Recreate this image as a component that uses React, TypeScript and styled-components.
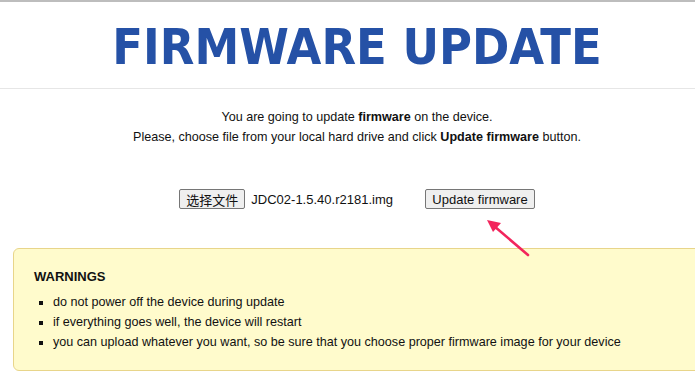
import React from 'react';
import styled, { createGlobalStyle } from 'styled-components';

const GlobalStyle = createGlobalStyle`
  html, body {
    margin: 0;
    padding: 0;
    background: #ffffff;
    overflow: hidden;
  }
  body {
    font-family: "Liberation Sans", Arial, sans-serif;
    font-size: 12.6px;
    color: #111;
  }
`;

const warnings = [
  'do not power off the device during update',
  'if everything goes well, the device will restart',
  'you can upload whatever you want, so be sure that you choose proper firmware image for your device',
];

const App = (): JSX.Element => {
  return (
    <Page>
      <GlobalStyle />
      <Header>
        <Title>FIRMWARE UPDATE</Title>
      </Header>
      <Main>
        <Intro>
          You are going to update <b>firmware</b> on the device.
          <br />
          Please, choose file from your local hard drive and click <b>Update firmware</b> button.
        </Intro>
        <FormRow>
          <FileInput>
            <FormButton as="span" $cjk>
              选择文件
            </FormButton>
            <FileName>JDC02-1.5.40.r2181.img</FileName>
          </FileInput>
          <FormButton type="button">Update firmware</FormButton>
          <Arrow width="50" height="44" viewBox="0 0 50 44">
            <line x1="44" y1="40" x2="10" y2="11" stroke="#f2255c" strokeWidth="2.6" strokeLinecap="round" />
            <polygon points="3,5 17,8 9,17" fill="#f2255c" />
          </Arrow>
        </FormRow>
        <WarningBox>
          <WarningTitle>WARNINGS</WarningTitle>
          <WarningList>
            {warnings.map((w, i) => (
              <li key={i}>{w}</li>
            ))}
          </WarningList>
        </WarningBox>
      </Main>
    </Page>
  );
};

export default App;

const Page = styled.div`
  width: 714px;
  min-height: 387px;
  border-top: 2px solid #bdbdbd;
`;

const Header = styled.header`
  height: 86px;
  display: flex;
  align-items: center;
  justify-content: center;
  border-bottom: 1px solid #e6e6e6;
`;

const Title = styled.h1`
  margin: 0;
  font-family: "DejaVu Sans Condensed", "DejaVu Sans", sans-serif;
  font-stretch: condensed;
  font-weight: bold;
  font-size: 50px;
  line-height: 1;
  color: #2551a6;
  padding-top: 4px;
`;

const Main = styled.main`
  display: flex;
  flex-direction: column;
  align-items: center;
  padding: 18px 13px 0;
`;

const Intro = styled.p`
  margin: 0;
  text-align: center;
  line-height: 20px;
`;

const FormRow = styled.div`
  position: relative;
  display: flex;
  align-items: center;
  gap: 4px;
  margin-top: 42px;
`;

const FileInput = styled.div`
  width: 242px;
  display: flex;
  align-items: center;
  gap: 6px;
`;

const FileName = styled.span`
  font-size: 13px;
  white-space: nowrap;
`;

const FormButton = styled.button<{ $cjk?: boolean }>`
  display: inline-flex;
  align-items: center;
  height: 20px;
  box-sizing: border-box;
  padding: 0 6px;
  margin: 0;
  border: 1px solid #767676;
  border-radius: 2px;
  background: #efefef;
  color: #111;
  font-family: ${(p) =>
    p.$cjk
      ? '"Noto Sans CJK SC", "Liberation Sans", sans-serif'
      : '"Liberation Sans", Arial, sans-serif'};
  font-size: 13px;
  white-space: nowrap;
`;

const Arrow = styled.svg`
  position: absolute;
  left: 305px;
  top: 26px;
`;

const WarningBox = styled.section`
  align-self: stretch;
  margin-top: 39px;
  padding: 19px 20px 18px;
  background: #fffbcc;
  border: 1px solid #e8d58a;
  border-radius: 6px;
`;

const WarningTitle = styled.div`
  font-weight: bold;
  font-size: 13px;
  line-height: 18px;
`;

const WarningList = styled.ul`
  margin: 6px 0 0;
  padding-left: 19px;
  list-style: square;
  line-height: 20px;
`;
